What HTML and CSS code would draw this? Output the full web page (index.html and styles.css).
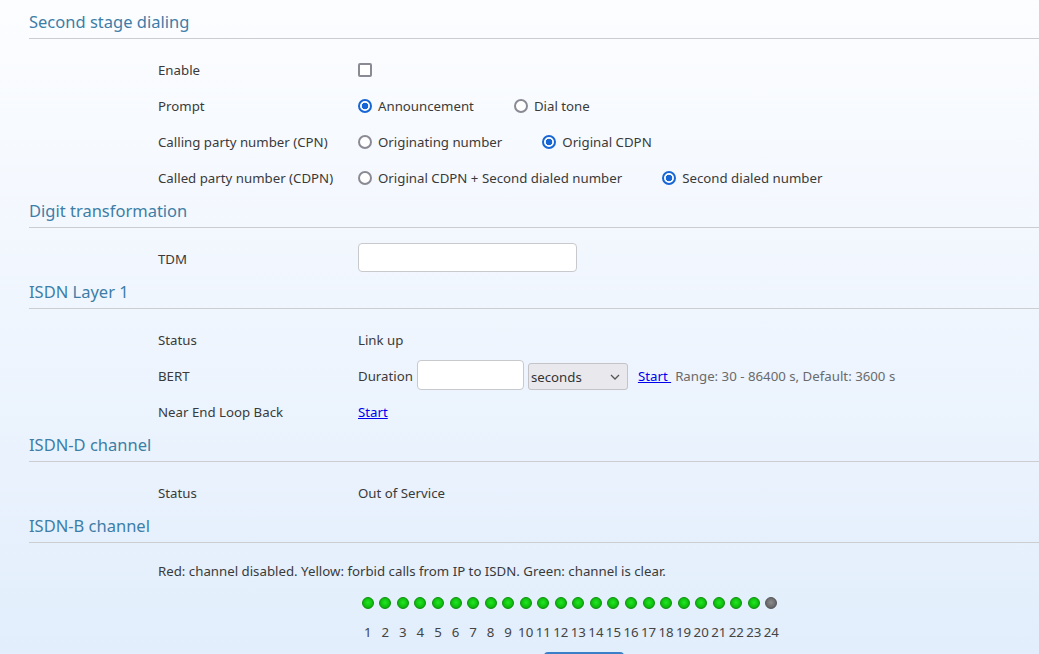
FILE: index.html
```html
<!DOCTYPE html>
<html>
<head>
<meta charset="utf-8">
<link rel="stylesheet" href="styles.css">
</head>
<body>
<div class="page">
  <section class="sec">
    <h2 class="sec-title">Second stage dialing</h2>
    <div class="sec-body">
      <div class="row"><div class="label">Enable</div><div class="value"><input type="checkbox" class="cb"></div></div>
      <div class="row"><div class="label">Prompt</div><div class="value">
        <label class="opt"><input type="radio" class="rd" name="prompt" checked><span>Announcement</span></label>
        <label class="opt"><input type="radio" class="rd" name="prompt"><span>Dial tone</span></label>
      </div></div>
      <div class="row"><div class="label">Calling party number (CPN)</div><div class="value">
        <label class="opt"><input type="radio" class="rd" name="cpn"><span>Originating number</span></label>
        <label class="opt"><input type="radio" class="rd" name="cpn" checked><span>Original CDPN</span></label>
      </div></div>
      <div class="row"><div class="label">Called party number (CDPN)</div><div class="value">
        <label class="opt"><input type="radio" class="rd" name="cdpn"><span>Original CDPN + Second dialed number</span></label>
        <label class="opt"><input type="radio" class="rd" name="cdpn" checked><span>Second dialed number</span></label>
      </div></div>
    </div>
  </section>

  <section class="sec">
    <h2 class="sec-title">Digit transformation</h2>
    <div class="sec-body">
      <div class="row"><div class="label">TDM</div><div class="value"><input type="text" class="txt txt-wide"></div></div>
    </div>
  </section>

  <section class="sec">
    <h2 class="sec-title">ISDN Layer 1</h2>
    <div class="sec-body">
      <div class="row"><div class="label">Status</div><div class="value">Link up</div></div>
      <div class="row"><div class="label">BERT</div><div class="value">
        <span class="dur-label">Duration</span>
        <input type="text" class="txt txt-dur">
        <span class="sel-wrap">
          <select class="sel"><option>seconds</option></select>
          <svg class="sel-arrow" width="10" height="6" viewBox="0 0 10 6"><path d="M1 1l4 4 4-4" fill="none" stroke="#555" stroke-width="1.3"/></svg>
        </span>
        <a href="#" class="link start-link">Start </a>
        <span class="hint">Range: 30 - 86400 s, Default: 3600 s</span>
      </div></div>
      <div class="row"><div class="label">Near End Loop Back</div><div class="value"><a href="#" class="link">Start</a></div></div>
    </div>
  </section>

  <section class="sec">
    <h2 class="sec-title">ISDN-D channel</h2>
    <div class="sec-body">
      <div class="row"><div class="label">Status</div><div class="value">Out of Service</div></div>
    </div>
  </section>

  <section class="sec">
    <h2 class="sec-title">ISDN-B channel</h2>
    <div class="sec-body">
      <div class="legend">Red: channel disabled. Yellow: forbid calls from IP to ISDN. Green: channel is clear.</div>
      <div class="chan-grid">
        <span class="dot g"></span><span class="dot g"></span><span class="dot g"></span><span class="dot g"></span>
        <span class="dot g"></span><span class="dot g"></span><span class="dot g"></span><span class="dot g"></span>
        <span class="dot g"></span><span class="dot g"></span><span class="dot g"></span><span class="dot g"></span>
        <span class="dot g"></span><span class="dot g"></span><span class="dot g"></span><span class="dot g"></span>
        <span class="dot g"></span><span class="dot g"></span><span class="dot g"></span><span class="dot g"></span>
        <span class="dot g"></span><span class="dot g"></span><span class="dot g"></span><span class="dot off"></span>
        <span class="num">1</span><span class="num">2</span><span class="num">3</span><span class="num">4</span>
        <span class="num">5</span><span class="num">6</span><span class="num">7</span><span class="num">8</span>
        <span class="num">9</span><span class="num">10</span><span class="num">11</span><span class="num">12</span>
        <span class="num">13</span><span class="num">14</span><span class="num">15</span><span class="num">16</span>
        <span class="num">17</span><span class="num">18</span><span class="num">19</span><span class="num">20</span>
        <span class="num">21</span><span class="num">22</span><span class="num">23</span><span class="num">24</span>
      </div>
      <div class="actions"><button class="btn" aria-label="Save"></button></div>
    </div>
  </section>
</div>
</body>
</html>
```

FILE: styles.css
```css
html, body {
  margin: 0;
  padding: 0;
}
body {
  min-height: 654px;
  background: linear-gradient(to bottom, #fcfdff 0px, #f0f6fe 300px, #e2eefc 654px);
  font-family: "Noto Sans", "Open Sans", sans-serif;
  font-size: 13.25px;
  color: #3a3a3a;
  overflow: hidden;
}
.page {
  padding: 7px 0 0 29px;
}
.sec-title {
  margin: 0;
  padding: 4px 0 5px 0;
  line-height: 22px;
  font-size: 16.5px;
  font-weight: normal;
  color: #3d7ea7;
  border-bottom: 1px solid #cbcdd1;
}
.sec-body {
  padding-top: 13px;
}
.row {
  display: flex;
  align-items: center;
  height: 36px;
}
.label {
  width: 200px;
  padding-left: 129px;
  flex: none;
}
.value {
  display: flex;
  align-items: center;
}
.opt {
  display: inline-flex;
  align-items: center;
  margin-right: 40px;
}
.opt span {
  margin-left: 6px;
}
.cb {
  appearance: none;
  -webkit-appearance: none;
  margin: 0;
  width: 14px;
  height: 14px;
  box-sizing: border-box;
  border: 2px solid #8a8a94;
  border-radius: 2px;
  background: #fff;
}
.rd {
  appearance: none;
  -webkit-appearance: none;
  margin: 0;
  width: 14px;
  height: 14px;
  box-sizing: border-box;
  border: 2px solid #8a8a94;
  border-radius: 50%;
  background: #fff;
  flex: none;
}
.rd:checked {
  border-color: #1766d6;
  background: radial-gradient(circle, #1766d6 0, #1766d6 3px, #fff 3.6px);
}
.txt {
  box-sizing: border-box;
  border: 1px solid #c8c9cc;
  border-radius: 4px;
  background: #fff;
  margin: 0;
  font: inherit;
}
.txt-wide {
  width: 219px;
  height: 29px;
  margin-top: -3px;
}
.dur-label {
  margin-right: 4px;
}
.txt-dur {
  width: 107px;
  height: 30px;
  margin-top: -2px;
}
.sel-wrap {
  position: relative;
  display: inline-flex;
  margin-left: 4px;
}
.sel {
  appearance: none;
  -webkit-appearance: none;
  box-sizing: border-box;
  width: 100px;
  height: 27px;
  margin: 0;
  padding: 2px 0 0 2px;
  border: 1px solid #c3c3c8;
  border-radius: 3px;
  background: #e9e9ed;
  font: inherit;
  color: #333;
}
.sel-arrow {
  position: absolute;
  right: 8px;
  top: 11px;
  pointer-events: none;
}
.link {
  color: #0000ee;
  text-decoration: underline;
}
.start-link {
  margin-left: 10px;
  white-space: pre;
}
.hint {
  margin-left: 4px;
  color: #6a6a6a;
}
.legend {
  padding-left: 129px;
  line-height: 30px;
  height: 30px;
}
.chan-grid {
  display: grid;
  grid-template-columns: repeat(24, 17.55px);
  grid-template-rows: 12px 18px;
  row-gap: 14px;
  margin: 11px 0 0 330px;
  justify-items: center;
  align-items: center;
}
.dot {
  width: 12px;
  height: 12px;
  box-sizing: border-box;
  border-radius: 50%;
}
.dot.g {
  background: radial-gradient(circle at 50% 45%, #22e622 0, #12c812 45%, #079d07 100%);
  border: 1px solid #0b8f0b;
}
.dot.off {
  background: radial-gradient(circle at 50% 45%, #8d8d8d 0, #6e6e6e 55%, #555 100%);
  border: 1px solid #555;
}
.num {
  line-height: 18px;
  color: #444;
}
.actions {
  margin: 11px 0 0 515px;
}
.btn {
  width: 80px;
  height: 30px;
  border: none;
  border-radius: 4px;
  background: #3b7fc9;
}
```
